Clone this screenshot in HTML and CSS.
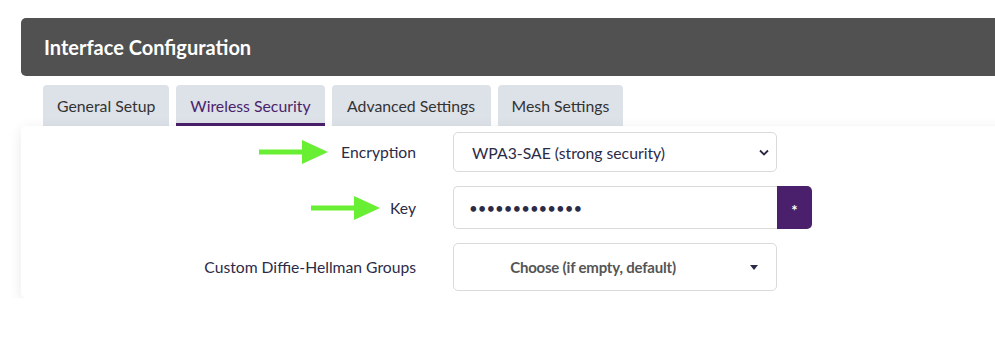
FILE: index.html
```html
<!DOCTYPE html>
<html lang="en">
<head>
  <meta charset="UTF-8" />
  <meta name="viewport" content="width=device-width, initial-scale=1.0" />
  <title>Interface Configuration</title>
  <link rel="stylesheet" href="styles.css">
</head>
<body>
  <div class="page">
    <header class="cbi-header">
      <h2>Interface Configuration</h2>
    </header>

    <ul class="tabs">
      <li class="tab">General Setup</li>
      <li class="tab active">Wireless Security</li>
      <li class="tab">Advanced Settings</li>
      <li class="tab">Mesh Settings</li>
    </ul>

    <div class="panel">
      <div class="row">
        <label class="row-label">
          <svg class="arrow" width="70" height="26" viewBox="0 0 70 26"><rect x="0" y="10.5" width="46" height="5" fill="#68ee33"/><polygon points="43,1 69,13 43,25" fill="#68ee33"/></svg>
          Encryption
        </label>
        <div class="field">
          <select class="select">
            <option>WPA3-SAE (strong security)</option>
          </select>
        </div>
      </div>

      <div class="row">
        <label class="row-label key-label">
          <svg class="arrow" width="70" height="26" viewBox="0 0 70 26"><rect x="0" y="10.5" width="46" height="5" fill="#68ee33"/><polygon points="43,1 69,13 43,25" fill="#68ee33"/></svg>
          Key
        </label>
        <div class="field key-field">
          <input class="key-input" type="password" value="secretpass123" />
          <button class="reveal">*</button>
        </div>
      </div>

      <div class="row">
        <label class="row-label">Custom Diffie-Hellman Groups</label>
        <div class="field">
          <div class="dropdown">
            <span class="dropdown-text">Choose (if empty, default)</span>
            <span class="caret"></span>
          </div>
        </div>
      </div>
    </div>
  </div>
</body>
</html>
```

FILE: styles.css
```css
* {
  margin: 0;
  padding: 0;
  box-sizing: border-box;
}

body {
  background: #ffffff;
  font-family: Lato, 'Open Sans', sans-serif;
  color: #2c2b47;
  overflow: hidden;
}

.page {
  padding: 18px 0 0 21px;
}

.cbi-header {
  background-color: #515151;
  height: 58px;
  border-radius: 5px 0 0 5px;
  margin-right: -20px;
  display: flex;
  align-items: center;
  padding-left: 23px;
}

.cbi-header h2 {
  color: #ffffff;
  font-size: 20px;
  font-weight: 700;
}

.tabs {
  list-style: none;
  display: flex;
  gap: 7px;
  margin-top: 9px;
  padding-left: 22px;
}

.tab {
  height: 41px;
  padding: 0 14px;
  display: flex;
  align-items: center;
  background-color: #dde1e8;
  border-radius: 4px 4px 0 0;
  font-size: 15.8px;
  color: #333333;
}

.tab:nth-child(3) {
  padding: 0 15.5px;
}

.tab.active {
  color: #4a1f6b;
  box-shadow: inset 0 -3px 0 #4a1f6b;
}

.panel {
  background: #ffffff;
  border-radius: 5px 0 0 5px;
  margin-right: -20px;
  padding: 6px 0 7px;
  box-shadow: 0 3px 14px rgba(0, 0, 0, 0.09);
  position: relative;
  display: flex;
  flex-direction: column;
  gap: 14px;
}

.row {
  display: grid;
  grid-template-columns: 395px 324px;
  column-gap: 37px;
  align-items: center;
}

.row-label {
  display: flex;
  justify-content: flex-end;
  align-items: center;
  gap: 12px;
  font-size: 15.7px;
  color: #2c2b47;
}

.key-label {
  gap: 9px;
}

.arrow {
  display: block;
}

.select {
  appearance: none;
  -webkit-appearance: none;
  width: 324px;
  height: 40px;
  border: 1px solid #dadada;
  border-radius: 5px;
  background: #fff url("data:image/svg+xml,%3Csvg xmlns='http://www.w3.org/2000/svg' width='10' height='7' viewBox='0 0 10 7'%3E%3Cpath d='M1 1.5l4 4 4-4' fill='none' stroke='%232c2b47' stroke-width='1.8'/%3E%3C/svg%3E") no-repeat right 7px center;
  padding: 0 18px;
  font-family: inherit;
  font-size: 15.75px;
  color: #2c2b47;
}

.key-field {
  display: flex;
  width: 360px;
}

.key-input {
  width: 324px;
  height: 43px;
  border: 1px solid #dadada;
  border-right: none;
  border-radius: 5px 0 0 5px;
  padding: 0 15px;
  font-family: Lato, sans-serif;
  font-size: 15px;
  letter-spacing: 0;
  color: #2c2b47;
  outline: none;
}

.reveal {
  width: 35px;
  height: 43px;
  border: none;
  border-radius: 0 5px 5px 0;
  background-color: #4a1f6b;
  color: #ffffff;
  font-family: Lato, sans-serif;
  font-size: 15px;
  font-weight: 700;
  padding-top: 5px;
}

.dropdown {
  width: 324px;
  height: 48px;
  border: 1px solid #dadada;
  border-radius: 5px;
  display: flex;
  align-items: center;
  padding: 0 18px 0 22px;
}

.dropdown-text {
  flex: 1;
  text-align: center;
  font-size: 15px;
  font-weight: 700;
  letter-spacing: -0.2px;
  color: #555555;
}

.caret {
  width: 0;
  height: 0;
  border-left: 4.5px solid transparent;
  border-right: 4.5px solid transparent;
  border-top: 5px solid #2c2b47;
  margin-left: 40px;
}
```
